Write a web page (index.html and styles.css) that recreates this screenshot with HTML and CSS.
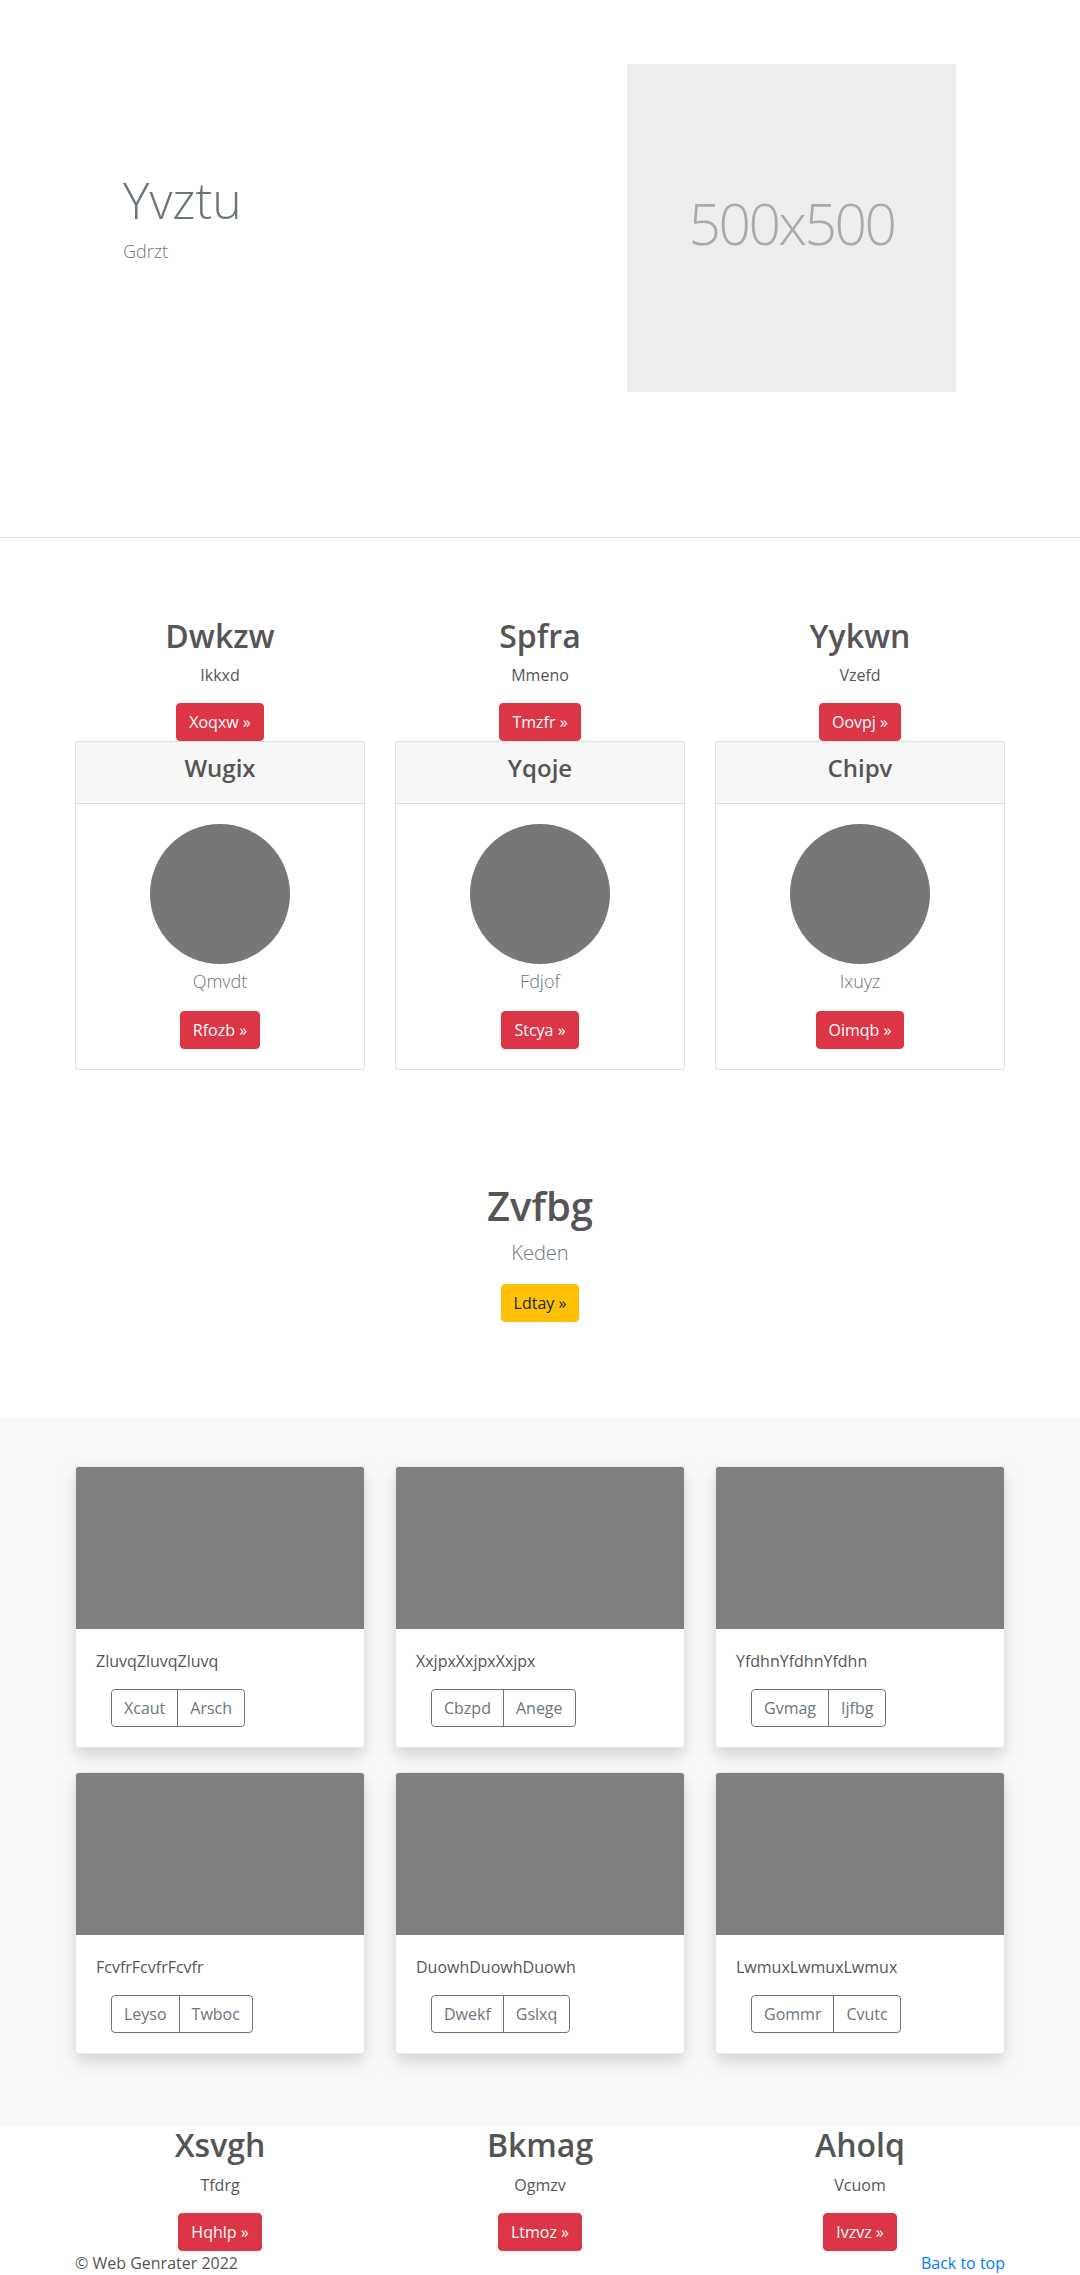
FILE: index.html
```html
<!DOCTYPE html>
<html lang="en">
<head>
<meta charset="utf-8">
<title>Yvztu</title>
<link rel="stylesheet" href="styles.css">
</head>
<body>
<section class="hero">
  <div class="container hero-row">
    <div class="hero-text">
      <h1 class="hero-title">Yvztu</h1>
      <p class="hero-lead">Gdrzt</p>
    </div>
    <div class="hero-media">
      <div class="placeholder"><span>500x500</span></div>
    </div>
  </div>
</section>

<section class="features container">
  <div class="grid3">
    <div class="feature">
      <h2>Dwkzw</h2>
      <p>Ikkxd</p>
      <a class="btn btn-danger" href="#">Xoqxw &raquo;</a>
    </div>
    <div class="feature">
      <h2>Spfra</h2>
      <p>Mmeno</p>
      <a class="btn btn-danger" href="#">Tmzfr &raquo;</a>
    </div>
    <div class="feature">
      <h2>Yykwn</h2>
      <p>Vzefd</p>
      <a class="btn btn-danger" href="#">Oovpj &raquo;</a>
    </div>
  </div>
  <div class="grid3">
    <div class="card">
      <div class="card-header"><h4>Wugix</h4></div>
      <div class="card-body">
        <div class="circle"></div>
        <p class="card-lead">Qmvdt</p>
        <a class="btn btn-danger" href="#">Rfozb &raquo;</a>
      </div>
    </div>
    <div class="card">
      <div class="card-header"><h4>Yqoje</h4></div>
      <div class="card-body">
        <div class="circle"></div>
        <p class="card-lead">Fdjof</p>
        <a class="btn btn-danger" href="#">Stcya &raquo;</a>
      </div>
    </div>
    <div class="card">
      <div class="card-header"><h4>Chipv</h4></div>
      <div class="card-body">
        <div class="circle"></div>
        <p class="card-lead">Ixuyz</p>
        <a class="btn btn-danger" href="#">Oimqb &raquo;</a>
      </div>
    </div>
  </div>
</section>

<section class="cta">
  <h1>Zvfbg</h1>
  <p>Keden</p>
  <a class="btn btn-warning" href="#">Ldtay &raquo;</a>
</section>

<section class="album">
  <div class="container grid3 album-grid">
    <div class="acard">
      <div class="acard-img"></div>
      <div class="acard-body">
        <p>ZluvqZluvqZluvq</p>
        <div class="btn-group"><a class="btn btn-outline" href="#">Xcaut</a><a class="btn btn-outline" href="#">Arsch</a></div>
      </div>
    </div>
    <div class="acard">
      <div class="acard-img"></div>
      <div class="acard-body">
        <p>XxjpxXxjpxXxjpx</p>
        <div class="btn-group"><a class="btn btn-outline" href="#">Cbzpd</a><a class="btn btn-outline" href="#">Anege</a></div>
      </div>
    </div>
    <div class="acard">
      <div class="acard-img"></div>
      <div class="acard-body">
        <p>YfdhnYfdhnYfdhn</p>
        <div class="btn-group"><a class="btn btn-outline" href="#">Gvmag</a><a class="btn btn-outline" href="#">Ijfbg</a></div>
      </div>
    </div>
    <div class="acard">
      <div class="acard-img"></div>
      <div class="acard-body">
        <p>FcvfrFcvfrFcvfr</p>
        <div class="btn-group"><a class="btn btn-outline" href="#">Leyso</a><a class="btn btn-outline" href="#">Twboc</a></div>
      </div>
    </div>
    <div class="acard">
      <div class="acard-img"></div>
      <div class="acard-body">
        <p>DuowhDuowhDuowh</p>
        <div class="btn-group"><a class="btn btn-outline" href="#">Dwekf</a><a class="btn btn-outline" href="#">Gslxq</a></div>
      </div>
    </div>
    <div class="acard">
      <div class="acard-img"></div>
      <div class="acard-body">
        <p>LwmuxLwmuxLwmux</p>
        <div class="btn-group"><a class="btn btn-outline" href="#">Gommr</a><a class="btn btn-outline" href="#">Cvutc</a></div>
      </div>
    </div>
  </div>
</section>

<section class="final container">
  <div class="grid3">
    <div class="feature">
      <h2>Xsvgh</h2>
      <p>Tfdrg</p>
      <a class="btn btn-danger" href="#">Hqhlp &raquo;</a>
    </div>
    <div class="feature">
      <h2>Bkmag</h2>
      <p>Ogmzv</p>
      <a class="btn btn-danger" href="#">Ltmoz &raquo;</a>
    </div>
    <div class="feature">
      <h2>Aholq</h2>
      <p>Vcuom</p>
      <a class="btn btn-danger" href="#">Ivzvz &raquo;</a>
    </div>
  </div>
</section>

<footer class="footer container">
  <p>&copy; Web Genrater 2022</p>
  <a href="#">Back to top</a>
</footer>
</body>
</html>
```

FILE: styles.css
```css
* { box-sizing: border-box; }

body {
  margin: 0;
  font-family: "Open Sans", "Noto Sans", sans-serif;
  font-size: 16px;
  line-height: 1.5;
  color: #555;
  background: #fff;
}

h1, h2, h4, p { margin: 0; }

.container {
  width: 930px;
  margin: 0 auto;
}

/* Hero */
.hero {
  padding: 64px 0 145px;
  border-bottom: 1px solid #e5e5e5;
}
.hero-row { display: flex; }
.hero-text {
  width: 465px;
  padding-left: 48px;
  padding-top: 106px;
}
.hero-title {
  font-size: 50px;
  font-weight: 300;
  line-height: 1.2;
  color: #6c757d;
  margin-bottom: 8px;
}
.hero-lead {
  font-size: 18px;
  font-weight: 300;
  line-height: 27px;
  color: #6c757d;
}
.hero-media { padding-left: 87px; }
.placeholder {
  width: 329px;
  height: 328px;
  background: #eee;
  color: #aaa;
  display: flex;
  align-items: center;
  justify-content: center;
  padding-bottom: 8px;
  font-size: 57px;
  font-weight: 300;
  letter-spacing: -2.5px;
}

/* Grid */
.grid3 {
  display: grid;
  grid-template-columns: repeat(3, 1fr);
  column-gap: 30px;
}

/* Features */
.features { padding-top: 79px; }
.feature {
  display: flex;
  flex-direction: column;
  align-items: center;
  text-align: center;
}
.feature h2 {
  font-size: 32px;
  font-weight: 600;
  line-height: 1.2;
  margin-bottom: 8px;
}
.feature p { margin-bottom: 16px; }

.btn {
  display: inline-block;
  padding: 6px 12px;
  font-size: 16px;
  line-height: 24px;
  border: 1px solid transparent;
  border-radius: 4px;
  text-decoration: none;
  white-space: nowrap;
}
.btn-danger { background: #dc3545; border-color: #dc3545; color: #fff; }
.btn-warning { background: #ffc107; border-color: #ffc107; color: #212529; }
.btn-outline { background: transparent; border-color: #6c757d; color: #6c757d; }

/* Cards */
.card {
  border: 1px solid rgba(0, 0, 0, .125);
  border-radius: 4px;
  background: #fff;
  overflow: hidden;
}
.card-header {
  background: rgba(0, 0, 0, .03);
  border-bottom: 1px solid rgba(0, 0, 0, .125);
  padding: 12px 20px;
  text-align: center;
}
.card-header h4 {
  font-size: 24px;
  font-weight: 600;
  line-height: 1.2;
  margin-bottom: 8px;
}
.card-body {
  padding: 20px;
  display: flex;
  flex-direction: column;
  align-items: center;
}
.circle {
  width: 140px;
  height: 140px;
  border-radius: 50%;
  background: #777;
  margin-bottom: 4px;
}
.card-lead {
  font-size: 18px;
  font-weight: 300;
  line-height: 27px;
  color: #6c757d;
  margin-bottom: 16px;
}

/* CTA */
.cta {
  padding: 112px 0 96px;
  display: flex;
  flex-direction: column;
  align-items: center;
  text-align: center;
}
.cta h1 {
  font-size: 40px;
  font-weight: 600;
  line-height: 1.2;
  margin-bottom: 8px;
}
.cta p {
  font-size: 20px;
  font-weight: 300;
  line-height: 30px;
  color: #6c757d;
  margin-bottom: 16px;
}

/* Album */
.album {
  background: #f8f9fa;
  padding: 48px 0 72px;
}
.album-grid { row-gap: 24px; }
.acard {
  background: #fff;
  border: 1px solid rgba(0, 0, 0, .09);
  border-radius: 4px;
  box-shadow: 0 8px 16px rgba(0, 0, 0, .15);
  overflow: hidden;
}
.acard-img {
  height: 162px;
  background: #808080;
}
.acard-body { padding: 20px; }
.acard-body p { margin-bottom: 16px; }
.btn-group {
  display: inline-flex;
  margin-left: 15px;
}
.btn-group .btn:first-child {
  border-top-right-radius: 0;
  border-bottom-right-radius: 0;
}
.btn-group .btn + .btn {
  margin-left: -1px;
  border-top-left-radius: 0;
  border-bottom-left-radius: 0;
}

/* Footer */
.footer {
  display: flex;
  justify-content: space-between;
}
.footer a {
  color: #007bff;
  text-decoration: none;
}
```
